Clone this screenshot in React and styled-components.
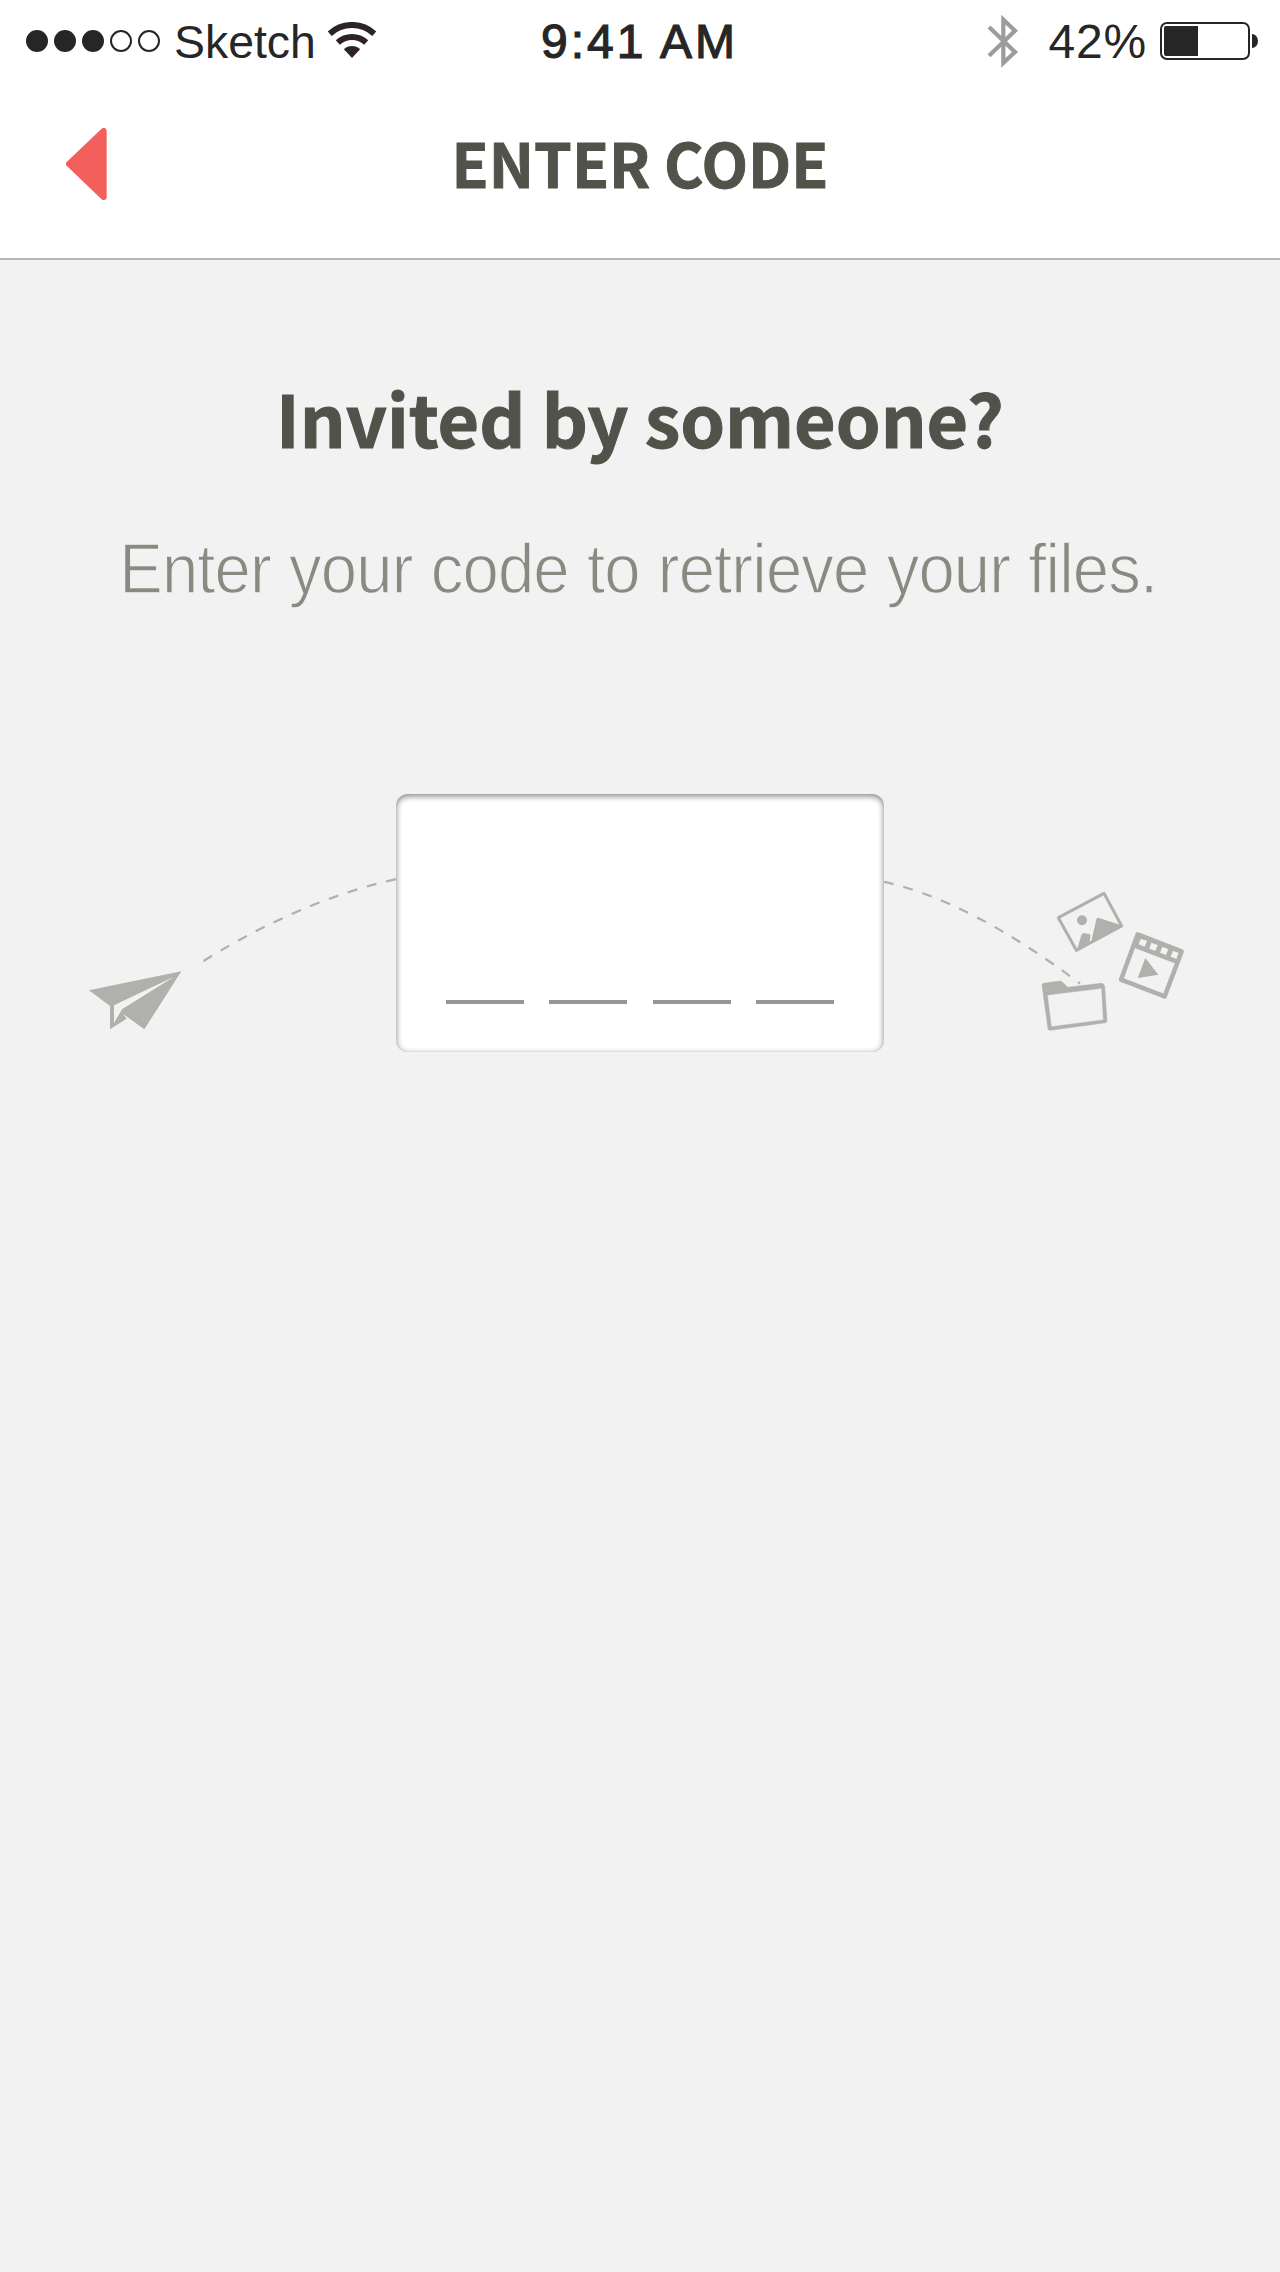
import React from "react";
import styled, { createGlobalStyle } from "styled-components";

const Global = createGlobalStyle`
  * { box-sizing: border-box; }
  body { margin: 0; background: #f2f2f2; }
`;

const display = `"Noto Sans CJK SC", "Noto Sans", sans-serif`;
const sans = `"Liberation Sans", Arial, sans-serif`;

const Screen = styled.div`
  width: 1280px;
  min-height: 2272px;
  background: #f2f2f2;
  overflow: hidden;
`;

const Header = styled.header`
  height: 260px;
  background: #ffffff;
  border-bottom: 2px solid #b5b5b5;
`;

const StatusBar = styled.div`
  display: grid;
  grid-template-columns: 1fr auto 1fr;
  height: 82px;
  padding: 0 22px 0 26px;
`;

const StatusGroup = styled.div`
  display: flex;
  align-items: center;
  justify-content: ${(p) => (p.$end ? "flex-end" : "flex-start")};
`;

const StatusText = styled.span`
  font: 400 ${(p) => p.$size || 48}px / 80px ${sans};
  padding-top: 2px;
  letter-spacing: ${(p) => p.$tracking || 0}px;
  color: #262626;
  white-space: nowrap;
  margin: ${(p) => p.$margin || 0};
  -webkit-text-stroke: ${(p) => p.$stroke || 0}px #262626;
`;

const Signal = styled.div`
  display: flex;
  gap: 6px;
`;

const SignalDot = styled.i`
  width: 22px;
  height: 22px;
  border-radius: 50%;
  border: 2px solid #262626;
  background: ${(p) => (p.$on ? "#262626" : "transparent")};
`;

const Battery = styled.div`
  width: 90px;
  height: 38px;
  padding: 2px;
  border: 2px solid #262626;
  border-radius: 7px;
`;

const Charge = styled.div`
  width: 34px;
  height: 30px;
  border-radius: 2px 0 0 2px;
  background: #262626;
`;

const BatteryCap = styled.div`
  width: 6px;
  height: 14px;
  margin-left: 2px;
  border-radius: 0 6px 6px 0 / 0 7px 7px 0;
  background: #262626;
`;

const NavBar = styled.nav`
  display: grid;
  grid-template-columns: 200px 1fr 200px;
  padding-top: 36px;
`;

const BackButton = styled.button`
  display: flex;
  padding: 10px 0 0 66px;
  border: 0;
  background: none;
`;

const Title = styled.h1`
  margin: 0;
  font: 700 60.5px / 88px ${display};
  color: #52524a;
  -webkit-text-stroke: 0.9px #52524a;
  text-align: center;
  white-space: nowrap;
`;

const Content = styled.main`
  display: flex;
  flex-direction: column;
  align-items: center;
`;

const Heading = styled.h2`
  margin: 107px 0 0;
  font: 700 71.7px / 100px ${display};
  color: #52524a;
  -webkit-text-stroke: 1px #52524a;
  white-space: nowrap;
`;

const Lead = styled.p`
  margin: 52px 3px 0 0;
  font: 400 69.5px / 100px ${sans};
  letter-spacing: -0.9px;
  word-spacing: 1px;
  color: #8a8a82;
  -webkit-text-stroke: 1.3px #f2f2f2;
  white-space: nowrap;
  transform: scaleX(0.938);
`;

const Transfer = styled.section`
  display: grid;
  grid-template-columns: 396px 488px 396px;
  margin-top: 175px;
`;

const Drawing = styled.svg`
  display: block;
  flex: none;
  margin: ${(p) => p.$margin || 0};
`;

const CodeBox = styled.div`
  display: flex;
  justify-content: space-between;
  align-items: flex-end;
  height: 258px;
  padding: 0 50px 48px;
  border-radius: 12px;
  background: #ffffff;
  box-shadow: inset 0 2px 6px rgba(0, 0, 0, 0.5), inset 0 0 1px rgba(0, 0, 0, 0.12);
`;

const Slot = styled.div`
  width: 78px;
  height: 4px;
  background: #969696;
`;

function Wifi() {
  return (
    <Drawing width="48" height="36" viewBox="984 66 144 108" $margin="0 0 2px 12px">
      <g fill="none" stroke="#2e2424" strokeWidth="18">
        <path d="M989 101A99 99 0 0 1 1123 101" />
        <path d="M1013.4 127.6A63 63 0 0 1 1098.6 127.6" />
      </g>
      <path d="M1056 174L1031.7 147.5A36 36 0 0 1 1080.3 147.5Z" fill="#2e2424" />
    </Drawing>
  );
}

function Bluetooth() {
  return (
    <Drawing width="32" height="54" viewBox="82 38 96 162" $margin="0 30px 0 0">
      <path
        d="M88 77L166 152L131 185V55L166 88L88 163"
        fill="none"
        stroke="#9c9c9c"
        strokeWidth="12.5"
      />
    </Drawing>
  );
}

function Send() {
  return (
    <Drawing width="396" height="258" viewBox="0 794 396 258">
      <path
        d="M203.5 961Q300 901 396 879"
        fill="none"
        stroke="#b0b1ac"
        strokeWidth="2.2"
        strokeDasharray="10 10"
      />
      <path
        transform="translate(70 850) scale(.33333)"
        fill="#b0b1ac"
        fillRule="evenodd"
        d="M57 421L334 364L223 538L158 491L170 506L120 538V468ZM132 466V519L156 478L312 380Z"
      />
    </Drawing>
  );
}

function Files() {
  return (
    <Drawing width="396" height="258" viewBox="884 794 396 258">
      <path
        d="M884 881.8Q970 901 1080 983.5"
        fill="none"
        stroke="#b0b1ac"
        strokeWidth="2.2"
        strokeDasharray="10 10"
      />
      <g transform="translate(1030 880) scale(.33333)" fill="#b0b1ac">
        <path
          d="M85 113L222 40L275 138L139 211Z"
          fill="none"
          stroke="#b0b1ac"
          strokeWidth="9"
          strokeLinejoin="round"
        />
        <circle cx="156" cy="121" r="15" />
        <path d="M183 188L199 118Q201 112 207 114L274 136V140Z" />
        <path d="M141 210L154 165Q156 159 162 160L178 162Q182 163 181 168L178 190Z" />
        <path
          d="M323 163L455 214L404 349L273 299Z"
          fill="none"
          stroke="#b0b1ac"
          strokeWidth="13.5"
          strokeLinejoin="round"
        />
        <path
          fillRule="evenodd"
          d="M321 160L458 213L438 251L308 202ZM332 177L351 182L344 200L326 193ZM364 188L383 195L376 213L358 206ZM397 200L415 207L408 225L390 218ZM429 212L447 219L440 237L422 230Z"
        />
        <path d="M346 234L385 284L323 294Z" />
        <path
          fillRule="evenodd"
          stroke="#b0b1ac"
          strokeWidth="1.5"
          d="M36 316Q36 311 41 310L89 303Q94 303 97 306L113 322L213 310Q223 311 224 319L231 423Q231 427 227 428L61 451Q55 451 54 446ZM52 345L64 440L220 420L215 325Z"
        />
      </g>
    </Drawing>
  );
}

export default function App() {
  return (
    <Screen>
      <Global />
      <Header>
        <StatusBar>
          <StatusGroup>
            <Signal>
              {[true, true, true, false, false].map((on, i) => (
                <SignalDot key={i} $on={on} />
              ))}
            </Signal>
            <StatusText $margin="0 0 0 14px" $size={46.4}>Sketch</StatusText>
            <Wifi />
          </StatusGroup>
          <StatusGroup>
            <StatusText $margin="0 5px 0 0" $tracking={3} $stroke={1.2}>9:41 AM</StatusText>
          </StatusGroup>
          <StatusGroup $end>
            <Bluetooth />
            <StatusText $margin="0 13px 0 0" $tracking={0.8}>42%</StatusText>
            <Battery>
              <Charge />
            </Battery>
            <BatteryCap />
          </StatusGroup>
        </StatusBar>
        <NavBar>
          <BackButton aria-label="Back">
            <Drawing width="41" height="72" viewBox="198 384 123 216">
              <path
                d="M207 491.5L311 393V591Z"
                fill="#f35f5c"
                stroke="#f35f5c"
                strokeWidth="18"
                strokeLinejoin="round"
              />
            </Drawing>
          </BackButton>
          <Title>ENTER CODE</Title>
        </NavBar>
      </Header>
      <Content>
        <Heading>Invited by someone?</Heading>
        <Lead>Enter your code to retrieve your files.</Lead>
        <Transfer>
          <Send />
          <CodeBox>
            <Slot />
            <Slot />
            <Slot />
            <Slot />
          </CodeBox>
          <Files />
        </Transfer>
      </Content>
    </Screen>
  );
}
